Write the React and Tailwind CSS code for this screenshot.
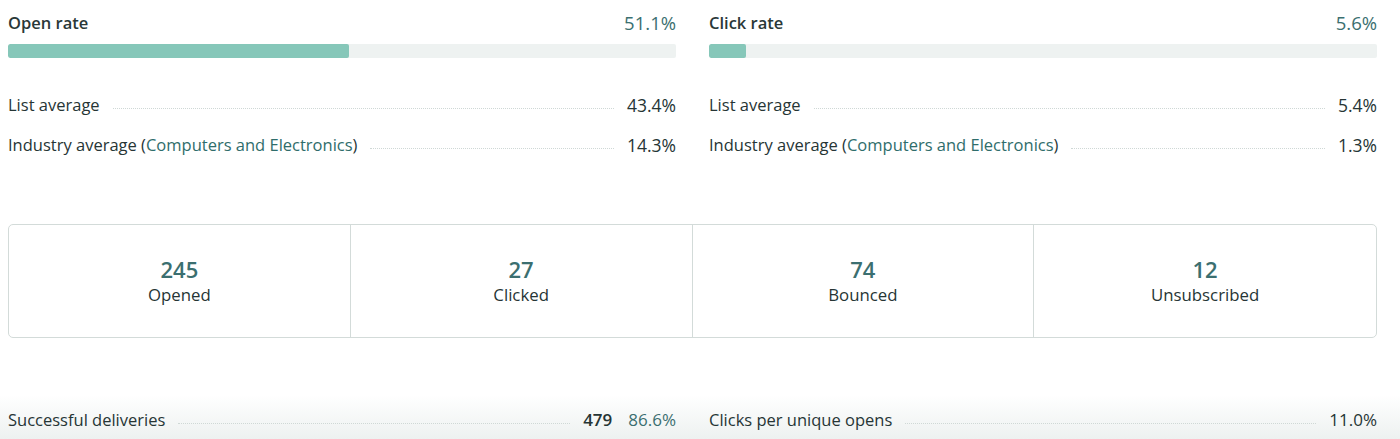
import React from "react";

const font = { fontFamily: '"Open Sans", "Liberation Sans", sans-serif' };

function Leader() {
  return <div className="flex-1 mx-[13px] self-center translate-y-[3px] border-b border-dotted border-[#cfd8d6]" />;
}

function RateColumn({ title, value, pct, list, industry }) {
  return (
    <div className="flex flex-col">
      <div className="flex h-6 items-center justify-between">
        <span className="text-[16.5px] font-semibold text-[#2a3838]">{title}</span>
        <span className="text-[18.5px] text-[#3b6f70]">{value}</span>
      </div>
      <div className="mt-[9px] h-[14px] w-full rounded-[2px] bg-[#eef2f1] overflow-hidden">
        <div className="h-full rounded-[2px] bg-[#86c7b9]" style={{ width: pct + "%" }} />
      </div>
      <div className="mt-[35px] flex h-6 items-center text-[16.5px]">
        <span>List average</span>
        <Leader />
        <span className="text-[17.5px]">{list}</span>
      </div>
      <div className="mt-4 flex h-6 items-center text-[16.5px]">
        <span>
          Industry average (<span className="text-[#2f6d6b]">Computers and Electronics</span>)
        </span>
        <Leader />
        <span className="text-[17.5px]">{industry}</span>
      </div>
    </div>
  );
}

function Stat({ n, label, last }) {
  return (
    <div className={"flex flex-col items-center justify-center " + (last ? "" : "border-r border-[#d3dbd9]")}>
      <span className="text-[22px] font-semibold leading-7 text-[#3b6f70]">{n}</span>
      <span className="text-[16.8px] leading-6">{label}</span>
    </div>
  );
}

export default function App() {
  return (
    <div style={font} className="w-[1400px] h-[439px] bg-white text-[#263535] overflow-hidden">
      <div className="ml-2 w-[1369px] pt-[11px]">
        <div className="grid grid-cols-2 gap-x-[33px]">
          <RateColumn title="Open rate" value="51.1%" pct={51.1} list="43.4%" industry="14.3%" />
          <RateColumn title="Click rate" value="5.6%" pct={5.6} list="5.4%" industry="1.3%" />
        </div>
        <div className="mt-[67px] grid h-[114px] grid-cols-4 rounded-[5px] border border-[#d3dbd9]">
          <Stat n="245" label="Opened" />
          <Stat n="27" label="Clicked" />
          <Stat n="74" label="Bounced" />
          <Stat n="12" label="Unsubscribed" last />
        </div>
      </div>
      <div className="mt-[57px] h-[44px] w-full bg-gradient-to-b from-white to-[#edf1f0] pt-[13px]">
        <div className="ml-2 grid w-[1369px] grid-cols-2 gap-x-[33px] text-[16.5px]">
          <div className="flex h-6 items-center">
            <span>Successful deliveries</span>
            <Leader />
            <span className="font-semibold text-[17px]">479</span>
            <span className="ml-4 text-[17px] text-[#3b6f70]">86.6%</span>
          </div>
          <div className="flex h-6 items-center">
            <span>Clicks per unique opens</span>
            <Leader />
            <span className="text-[17px]">11.0%</span>
          </div>
        </div>
      </div>
    </div>
  );
}
